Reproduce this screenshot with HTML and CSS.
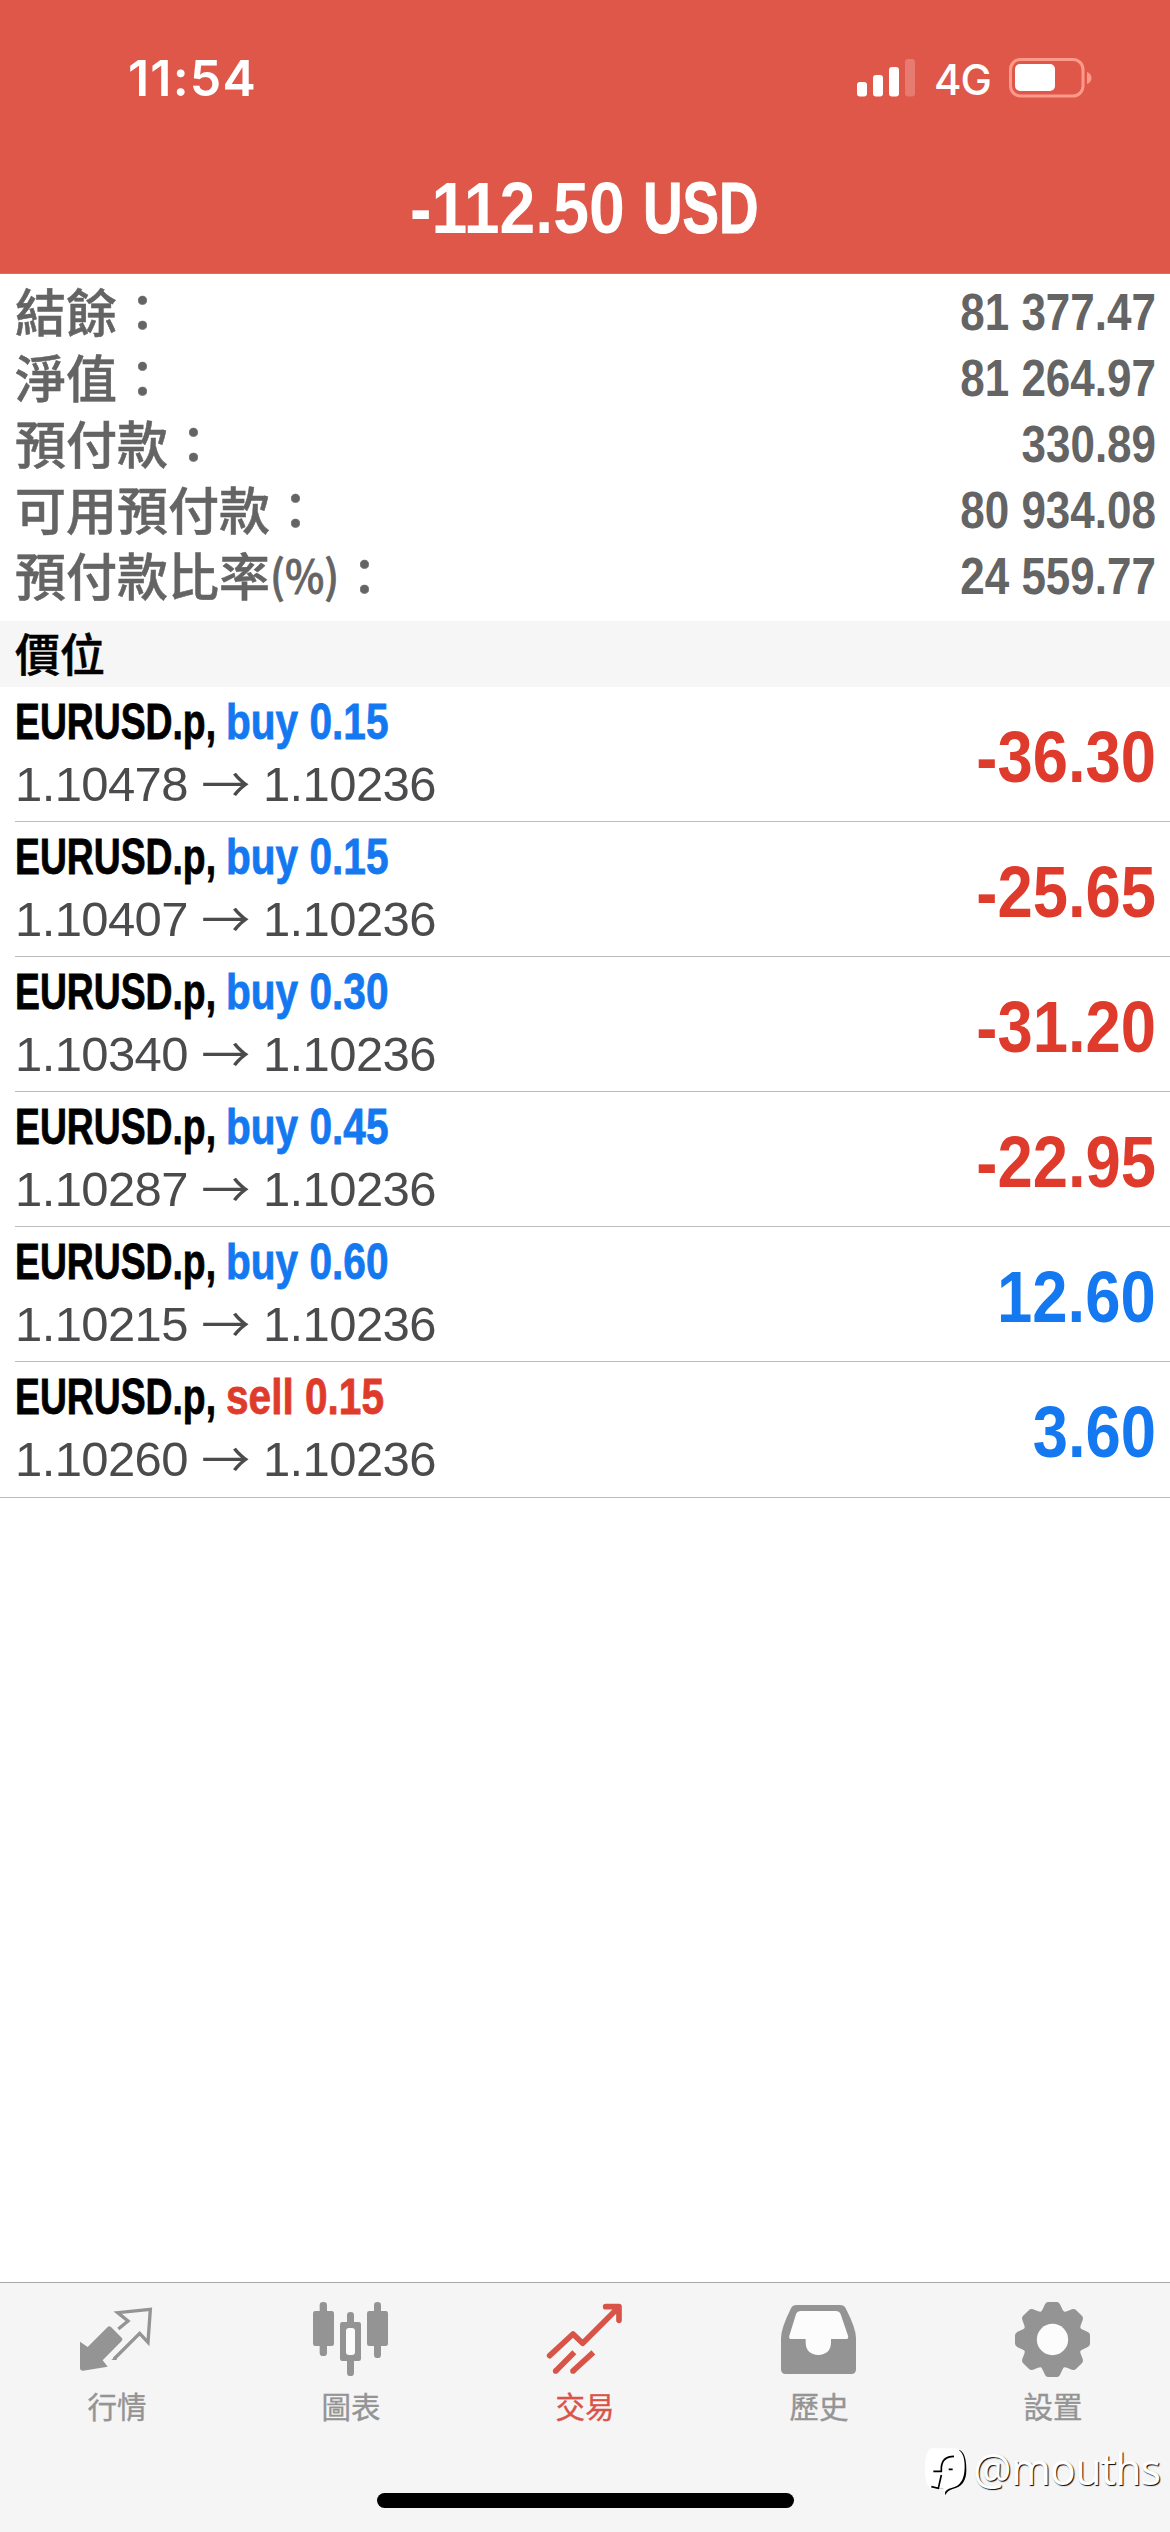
FILE: index.html
```html
<!DOCTYPE html>
<html lang="zh-Hant">
<head>
<meta charset="utf-8">
<title>交易</title>
<link rel="stylesheet" href="styles.css">
</head>
<body>
<div class="app">
  <header class="header">
    <div class="status">
      <span class="clock">11:54</span>
      <div class="status-right">
        <svg class="signal" width="59" height="38" viewBox="0 0 59 38" fill="#fff">
          <rect x="0" y="23" width="10" height="14.5" rx="3"/>
          <rect x="16" y="16" width="10" height="21.5" rx="3"/>
          <rect x="32" y="8" width="10" height="29.5" rx="3"/>
          <rect x="48" y="0" width="10" height="37.5" rx="3" opacity=".22"/>
        </svg>
        <span class="network">4G</span>
        <svg class="battery" width="84" height="40" viewBox="0 0 84 40">
          <rect x="1.5" y="1.5" width="72.5" height="36.5" rx="10" fill="none" stroke="#ff9a8b" stroke-width="3"/>
          <rect x="6" y="6" width="40" height="27" rx="5" fill="#fff"/>
          <path d="M78 14c6 2 6 10 0 12z" fill="#ff9a8b"/>
        </svg>
      </div>
    </div>
    <h1 class="total"><span class="amount">-112.50</span><span class="currency">USD</span></h1>
  </header>

  <dl class="summary">
    <div class="summary-row"><dt>結餘：</dt><dd>81 377.47</dd></div>
    <div class="summary-row"><dt>淨值：</dt><dd>81 264.97</dd></div>
    <div class="summary-row"><dt>預付款：</dt><dd>330.89</dd></div>
    <div class="summary-row"><dt>可用預付款：</dt><dd>80 934.08</dd></div>
    <div class="summary-row"><dt>預付款比率<span class="percent">(%)</span>：</dt><dd>24 559.77</dd></div>
  </dl>

  <h2 class="section">價位</h2>

  <ul class="orders">
    <li class="order">
      <div class="info">
        <div class="line"><span class="symbol">EURUSD.p,</span><span class="side buy">buy 0.15</span></div>
        <div class="prices">1.10478<span class="arrow">→</span>1.10236</div>
      </div>
      <span class="profit loss">-36.30</span>
    </li>
    <li class="order">
      <div class="info">
        <div class="line"><span class="symbol">EURUSD.p,</span><span class="side buy">buy 0.15</span></div>
        <div class="prices">1.10407<span class="arrow">→</span>1.10236</div>
      </div>
      <span class="profit loss">-25.65</span>
    </li>
    <li class="order">
      <div class="info">
        <div class="line"><span class="symbol">EURUSD.p,</span><span class="side buy">buy 0.30</span></div>
        <div class="prices">1.10340<span class="arrow">→</span>1.10236</div>
      </div>
      <span class="profit loss">-31.20</span>
    </li>
    <li class="order">
      <div class="info">
        <div class="line"><span class="symbol">EURUSD.p,</span><span class="side buy">buy 0.45</span></div>
        <div class="prices">1.10287<span class="arrow">→</span>1.10236</div>
      </div>
      <span class="profit loss">-22.95</span>
    </li>
    <li class="order">
      <div class="info">
        <div class="line"><span class="symbol">EURUSD.p,</span><span class="side buy">buy 0.60</span></div>
        <div class="prices">1.10215<span class="arrow">→</span>1.10236</div>
      </div>
      <span class="profit gain">12.60</span>
    </li>
    <li class="order">
      <div class="info">
        <div class="line"><span class="symbol">EURUSD.p,</span><span class="side sell">sell 0.15</span></div>
        <div class="prices">1.10260<span class="arrow">→</span>1.10236</div>
      </div>
      <span class="profit gain">3.60</span>
    </li>
  </ul>

  <footer class="footer">
    <nav class="tabs">
      <a class="tab">
        <svg viewBox="111 90 240 240">
          <path fill="currentColor" d="M120 215L143 231L203 171Q208 166 213 171L245 203Q250 208 245 213L188 271L203 290L129 302Q120 302 120 294Z"/>
          <path fill="none" stroke="currentColor" stroke-width="10" d="M235 177L264 153L233 128L331 118L324 217L299 190L222 267"/>
          <path fill="currentColor" d="M214 270L230 270L230 256Z"/>
        </svg>
        <span>行情</span>
      </a>
      <a class="tab">
        <svg viewBox="813 90 240 240">
          <g fill="currentColor">
            <rect x="839" y="96" width="22" height="162" rx="10"/>
            <rect x="819" y="123" width="63" height="105" rx="7"/>
            <rect x="1002" y="96" width="21" height="168" rx="10"/>
            <rect x="981" y="123" width="63" height="105" rx="7"/>
            <rect x="921" y="126" width="21" height="192" rx="10"/>
            <rect x="900" y="156" width="63" height="117" rx="7"/>
          </g>
          <rect x="918" y="174" width="27" height="81" rx="9" fill="#fcfcfc"/>
        </svg>
        <span>圖表</span>
      </a>
      <a class="tab active">
        <svg viewBox="135 90 240 240" fill="none" stroke="currentColor" stroke-width="17">
          <path stroke-linecap="round" stroke-linejoin="round" d="M149 257L219 192L248 220L356 112M317 110H357V151"/>
          <path fill="currentColor" stroke="none" d="M335 110H360V135Z"/>
          <path d="M168 302L223 247M220 302L280 247"/>
          <circle cx="167" cy="303" r="8.500" fill="currentColor" stroke="none"/>
          <circle cx="219" cy="303" r="8.500" fill="currentColor" stroke="none"/>
        </svg>
        <span>交易</span>
      </a>
      <a class="tab">
        <svg viewBox="837 90 240 240">
          <path fill="currentColor" d="M890 105H1020Q1032 105 1037 115Q1068 175 1068 205V298Q1068 312 1054 312H857Q843 312 843 298V205Q843 175 873 115Q878 105 890 105Z"/>
          <path fill="#fcfcfc" d="M903 123H1007Q1018 123 1022 133L1044 197Q1047 207 1037 207H993V217C993 242 978 255 955 255S917 242 917 217V207H875Q865 207 868 197L888 133Q892 123 903 123Z"/>
        </svg>
        <span>歷史</span>
      </a>
      <a class="tab">
        <svg viewBox="399 90 240 240">
          <g fill="currentColor" transform="translate(517.500 208.500)">
            <circle r="88"/>
            <path id="tooth" d="M-39 -78Q-30 -86 -26 -98Q-21 -112.500 -13 -112.500H13Q21 -112.500 26 -98Q30 -86 39 -78Z"/>
            <use href="#tooth" transform="rotate(45)"/>
            <use href="#tooth" transform="rotate(90)"/>
            <use href="#tooth" transform="rotate(135)"/>
            <use href="#tooth" transform="rotate(180)"/>
            <use href="#tooth" transform="rotate(225)"/>
            <use href="#tooth" transform="rotate(270)"/>
            <use href="#tooth" transform="rotate(315)"/>
          </g>
          <circle cx="517.500" cy="208.500" r="47" fill="#fcfcfc"/>
        </svg>
        <span>設置</span>
      </a>
    </nav>
    <div class="home-bar"></div>
  </footer>

  <div class="watermark">
    <svg width="46" height="50" viewBox="132 530 138 150">
      <path fill="#000" d="M160 540H240Q259 550 259 600Q259 648 218 656Q202 660 196 675Q193 660 199 655H170L150 640Z"/>
      <path fill="#fff" d="M158 534H218Q254 534 254 590Q254 645 214 653Q198 657 194 668L190 655H160Q135 655 135 595Q135 534 158 534Z"/>
      <path fill="none" stroke="#000" stroke-width="5" d="M160 603H184V592Q186 558 222 558M184 614L175 654L154 649M206 597H218"/>
    </svg>
    <span>@mouths</span>
  </div>
</div>
</body>
</html>
```
FILE: styles.css
```css
* {
  box-sizing: border-box;
}

body,
h1,
h2,
dl,
dd,
ul {
  margin: 0;
  padding: 0;
}

body {
  background: #fff;
  font-family: "Liberation Sans", "Noto Sans CJK TC", sans-serif;
}

.app {
  position: relative;
  display: flex;
  flex-direction: column;
  width: 1170px;
  height: 2532px;
  overflow: hidden;
}

/* Header */
.header {
  height: 274px;
  background: #de5749;
  border-bottom: 1px solid #a98480;
  color: #fff;
}

.status {
  display: flex;
  justify-content: space-between;
  height: 158px;
  padding: 58px 77px 0 128px;
}

.clock {
  font: 600 50px/41px Inter, sans-serif;
  letter-spacing: 1.2px;
}

.status-right {
  display: flex;
  align-items: flex-start;
}

.signal {
  margin-top: 1px;
}

.network {
  width: 55px;
  margin: 2px 20px 0 18px;
  font: 500 42px/40px Inter, sans-serif;
  letter-spacing: -1px;
}

.total {
  display: flex;
  padding-left: 410px;
  font-size: 73px;
  line-height: 100px;
}

.amount {
  width: 233px;
  transform: scaleX(.882);
  transform-origin: left;
}

.currency {
  transform: scaleX(.75);
  transform-origin: left;
  -webkit-text-stroke: 1px currentColor;
}

/* Account summary */
.summary {
  height: 347px;
  padding: 5px 14px 0 15px;
  color: #646464;
}

.summary-row {
  display: flex;
  justify-content: space-between;
  height: 66px;
}

.summary-row dt {
  display: flex;
  font-family: "Noto Sans CJK TC", sans-serif;
  font-size: 51px;
  font-weight: 500;
  line-height: 62px;
  -webkit-text-stroke: .5px currentColor;
}

.percent {
  width: 69px;
  font-size: 45px;
  transform: scaleX(.93);
  transform-origin: left;
  -webkit-text-stroke: .8px currentColor;
}

.summary-row dd {
  font-size: 51px;
  font-weight: 700;
  line-height: 68px;
  transform: scaleX(.862);
  transform-origin: right;
}

.section {
  height: 66px;
  padding-left: 15px;
  background: #f6f6f6;
  color: #000;
  font: 500 45px/64px "Noto Sans CJK TC", sans-serif;
  -webkit-text-stroke: .5px currentColor;
}

/* Orders */
.orders {
  list-style: none;
  border-bottom: 1px solid #bcbcbe;
}

.order {
  display: flex;
  justify-content: space-between;
  height: 135px;
  margin-left: 15px;
  padding-right: 14px;
  border-bottom: 1px solid #bcbcbe;
}

.order:last-child {
  border-bottom: 0;
}

.info {
  padding-top: 5px;
}

.line {
  display: flex;
  height: 60px;
  font-size: 50px;
  font-weight: 700;
  line-height: 61px;
  white-space: nowrap;
  -webkit-text-stroke: .8px currentColor;
}

.symbol {
  width: 211px;
  transform: scaleX(.746);
  transform-origin: left;
}

.side {
  transform: scaleX(.812);
  transform-origin: left;
}

.buy,
.gain {
  color: #1478f0;
}

.sell,
.loss {
  color: #df3b2c;
}

.prices {
  display: flex;
  height: 64px;
  color: #4b4b4d;
  font-size: 49px;
  letter-spacing: -.6px;
  line-height: 64px;
}

.arrow {
  width: 75px;
  font-family: "Noto Sans CJK TC", sans-serif;
  font-size: 49px;
  line-height: 60px;
  text-align: center;
}

.profit {
  font-size: 73px;
  font-weight: 700;
  line-height: 139px;
  transform: scaleX(.868);
  transform-origin: right;
}

/* Tab bar */
.footer {
  display: flex;
  flex-direction: column;
  align-items: center;
  height: 250px;
  margin-top: auto;
  background: #f5f5f5;
  border-top: 1px solid #a8a8a8;
}

.tabs {
  display: grid;
  grid-template-columns: repeat(5, 1fr);
  width: 100%;
  height: 210px;
  padding-top: 17px;
}

.tab {
  display: flex;
  flex-direction: column;
  align-items: center;
  color: #949494;
  font: 400 29.5px/44px "Noto Sans CJK TC", sans-serif;
}

.tab svg {
  width: 80px;
  height: 80px;
  margin-bottom: 3px;
}

.tab span {
  -webkit-text-stroke: .4px currentColor;
}

.active {
  color: #d95448;
}

.home-bar {
  width: 417px;
  height: 15px;
  border-radius: 8px;
  background: #000;
}

.watermark {
  position: absolute;
  left: 924px;
  top: 2447px;
  display: flex;
  gap: 3px;
  color: #fff;
  font: 400 43px/44px "Noto Sans", sans-serif;
  letter-spacing: -1px;
  text-shadow: 1px 1px 1px #000;
}
```
